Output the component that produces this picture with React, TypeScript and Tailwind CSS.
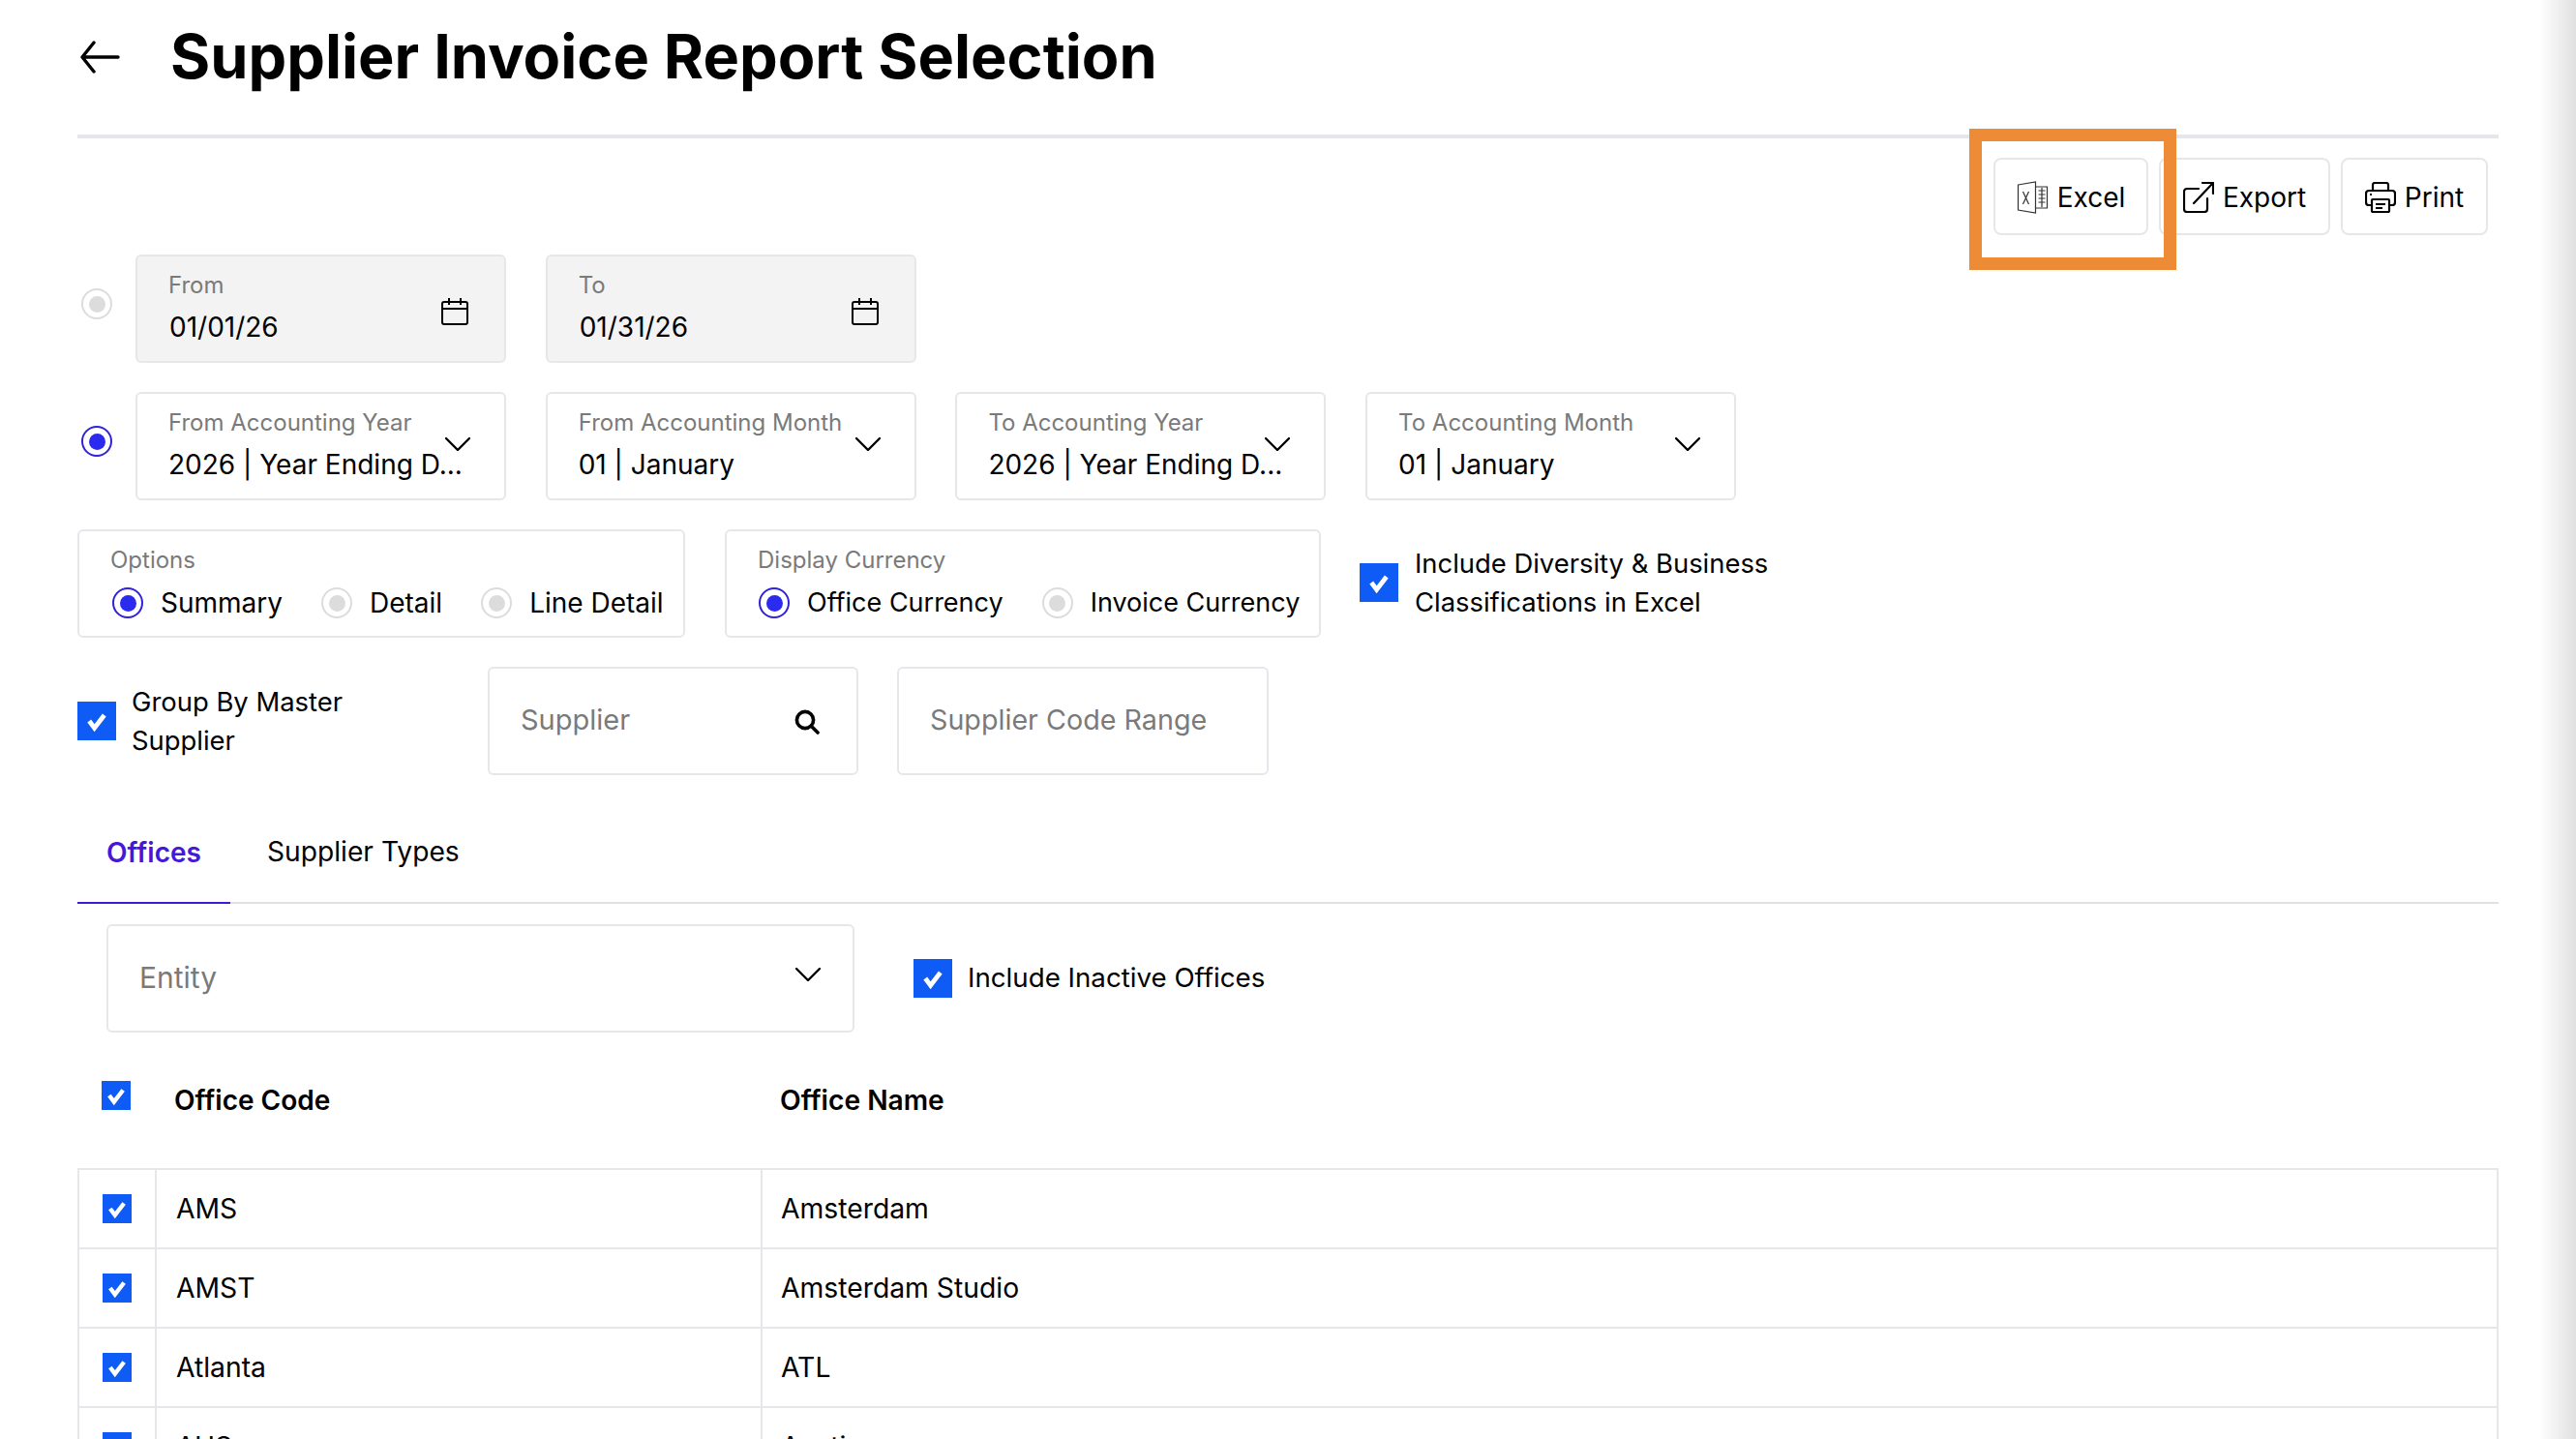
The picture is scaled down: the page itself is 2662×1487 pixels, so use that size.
const offices = [
  { code: "AMS", name: "Amsterdam" },
  { code: "AMST", name: "Amsterdam Studio" },
  { code: "Atlanta", name: "ATL" },
  { code: "AUS", name: "Austin" },
  { code: "BER", name: "Berlin" },
];

const Check = ({ small }: { small?: boolean }) => (
  <span
    className={`flex shrink-0 items-center justify-center bg-[#0f5bf5] ${small ? "h-[30px] w-[30px]" : "h-[40px] w-[40px]"}`}
  >
    <svg viewBox="0 0 20 20" className={small ? "h-[22px] w-[22px]" : "h-[24px] w-[24px]"}>
      <path d="M3.5 10l4.5 6 8.5-11" fill="none" stroke="#fff" strokeWidth="4" />
    </svg>
  </span>
);

const Radio = ({ on }: { on?: boolean }) => (
  <span
    className={`flex h-[32px] w-[32px] shrink-0 items-center justify-center rounded-full border-2 ${on ? "border-[#2f22d8]" : "border-[#dcdcdc]"}`}
  >
    <span className={`h-[17px] w-[17px] rounded-full ${on ? "bg-[#2b2bf0]" : "bg-[#dcdcdc]"}`} />
  </span>
);

const Chevron = () => (
  <svg viewBox="0 0 26 14" fill="none" className="absolute right-[35px] top-[45px] h-[14px] w-[26px]">
    <path d="M1 1l12 12L25 1" stroke="#000" strokeWidth="2.4" strokeLinecap="round" strokeLinejoin="round" />
  </svg>
);

const Calendar = () => (
  <svg viewBox="0 0 28 28" fill="none" stroke="#000" strokeWidth="2" className="absolute right-[37px] top-[43px] h-[28px] w-[28px]">
    <rect x="1" y="4" width="26" height="23" rx="2" />
    <path d="M1 11h26M8 0v7M20 0v7" />
  </svg>
);

const Field = ({ label, value, disabled, icon }: { label: string; value: string; disabled?: boolean; icon: "calendar" | "chevron" }) => (
  <div
    className={`relative h-[112px] w-[383px] rounded-[6px] border-2 border-[#e5e7eb] pl-[32px] ${disabled ? "bg-[#f3f3f3]" : "bg-white"}`}
  >
    <div className="mt-[15px] text-[24px] leading-[30px] text-[#7a7a7a]">{label}</div>
    <div className={`mt-[10px] text-[28px] leading-[36px] text-black ${disabled ? "pl-[1px]" : ""}`}>{value}</div>
    {icon === "calendar" ? <Calendar /> : <Chevron />}
  </div>
);

const RadioOption = ({ label, on, size }: { label: string; on?: boolean; size: string }) => (
  <div className="flex items-center gap-[18px]">
    <Radio on={on} />
    <span className={`leading-[36px] text-black ${size}`}>{label}</span>
  </div>
);

const Placeholder = ({ text, width, size }: { text: string; width: string; size: string }) => (
  <div className={`relative flex h-[112px] items-center rounded-[6px] border-2 border-[#e5e7eb] pb-[2px] pl-[32px] text-[#7a7a7a] ${size} ${width}`}>
    {text}
  </div>
);

const ExcelIcon = () => (
  <svg viewBox="0 0 32 34" fill="none" stroke="#333" strokeWidth="1.2" className="h-[34px] w-[33px]">
    <path d="M1 4l18-3v32L1 30z" fill="#fff" />
    <path d="M19 6h12v22H19M22 10h7M22 14h7M22 18h7M22 22h7M25.5 7v20" />
    <path d="M6 11l6 13M12 11l-6 13" />
  </svg>
);

const ExportIcon = () => (
  <svg viewBox="0 0 32 32" fill="none" stroke="#000" strokeWidth="2.2" strokeLinecap="round" strokeLinejoin="round" className="h-[32px] w-[32px]">
    <path d="M16 7H4a3 3 0 0 0-3 3v18a3 3 0 0 0 3 3h18a3 3 0 0 0 3-3V17" />
    <path d="M11 22L31 1M20 1h11v11" />
  </svg>
);

const PrintIcon = () => (
  <svg viewBox="0 0 32 32" fill="none" stroke="#000" strokeWidth="2.2" strokeLinejoin="round" className="h-[32px] w-[32px]">
    <path d="M8 9V3a2 2 0 0 1 2-2h12a2 2 0 0 1 2 2v6" />
    <path d="M7 24H4a3 3 0 0 1-3-3v-9a3 3 0 0 1 3-3h24a3 3 0 0 1 3 3v9a3 3 0 0 1-3 3h-3" />
    <rect x="7" y="18" width="18" height="13" rx="1" />
    <path d="M11 23h10M11 27h7M5 13h2" />
  </svg>
);

const ActionButton = ({ label, width, children }: { label: string; width: string; children: React.ReactNode }) => (
  <button className={`flex h-[80px] items-center justify-center gap-[9px] rounded-[8px] border-2 border-[#e5e7eb] bg-white pt-[1px] text-[28px] text-black ${width}`}>
    {children}
    {label}
  </button>
);

export default function App() {
  return (
    <div className="relative h-[1487px] w-full overflow-hidden bg-white pl-[80px] pr-[80px] font-['Inter',sans-serif] text-black">
      <div className="flex h-[139px] items-center">
        <svg viewBox="0 0 42 34" fill="none" stroke="#000" strokeWidth="3.4" strokeLinecap="round" strokeLinejoin="round" className="mb-[22px] ml-[2px] h-[34px] w-[42px]">
          <path d="M40 17H3M15 2L3 17l12 15" />
        </svg>
        <h1 className="mb-[22px] ml-[52px] text-[63px] font-bold leading-none">Supplier Invoice Report Selection</h1>
      </div>
      <div className="h-[4px] bg-[#e5e7eb]" />

      <div className="mr-[11px] mt-[20px] flex justify-end gap-[11px]">
        <ActionButton label="Excel" width="w-[160px]"><ExcelIcon /></ActionButton>
        <ActionButton label="Export" width="w-[177px]"><ExportIcon /></ActionButton>
        <ActionButton label="Print" width="w-[152px]"><PrintIcon /></ActionButton>
      </div>

      <div className="mt-[20px] flex items-center">
        <span className="ml-[4px] mr-[24px] -translate-y-[5px]"><Radio /></span>
        <div className="flex gap-[40.7px]">
          <Field label="From" value="01/01/26" disabled icon="calendar" />
          <Field label="To" value="01/31/26" disabled icon="calendar" />
        </div>
      </div>

      <div className="mt-[30px] flex items-center">
        <span className="ml-[4px] mr-[24px] -translate-y-[5px]"><Radio on /></span>
        <div className="flex gap-[40.7px]">
          <Field label="From Accounting Year" value="2026 | Year Ending D..." icon="chevron" />
          <Field label="From Accounting Month" value="01 | January" icon="chevron" />
          <Field label="To Accounting Year" value="2026 | Year Ending D..." icon="chevron" />
          <Field label="To Accounting Month" value="01 | January" icon="chevron" />
        </div>
      </div>

      <div className="mt-[30px] flex">
        <div className="h-[112px] w-[628px] rounded-[6px] border-2 border-[#e5e7eb] pl-[32px]">
          <div className="mt-[15px] text-[24px] leading-[30px] text-[#7a7a7a]">Options</div>
          <div className="mt-[11px] flex gap-[40px] pl-[2px]">
            <RadioOption label="Summary" on size="text-[28px]" />
            <RadioOption label="Detail" size="text-[28px]" />
            <RadioOption label="Line Detail" size="text-[28px]" />
          </div>
        </div>
        <div className="ml-[41px] h-[112px] w-[616px] rounded-[6px] border-2 border-[#e5e7eb] pl-[32px]">
          <div className="mt-[15px] text-[24px] leading-[30px] text-[#7a7a7a]">Display Currency</div>
          <div className="mt-[11px] flex gap-[40px] pl-[1px]">
            <RadioOption label="Office Currency" on size="text-[27px]" />
            <RadioOption label="Invoice Currency" size="text-[27px]" />
          </div>
        </div>
        <div className="ml-[40px] mt-[35px] flex h-[40px] items-center">
          <Check />
        </div>
        <div className="ml-[17px] mt-[15px] text-[27.4px] leading-[40px]">
          Include Diversity &amp; Business
          <br />
          Classifications in Excel
        </div>
      </div>

      <div className="mt-[30px] flex h-[112px]">
        <div className="flex w-[424px] items-center gap-[16px]">
          <Check />
          <span className="text-[27.4px] leading-[40px]">
            Group By Master
            <br />
            Supplier
          </span>
        </div>
        <div className="relative">
          <Placeholder text="Supplier" width="w-[383px]" size="text-[29px]" />
          <svg viewBox="0 0 26 26" fill="none" stroke="#000" strokeWidth="3.6" strokeLinecap="round" className="absolute right-[40px] top-[44px] h-[26px] w-[26px]">
            <circle cx="11" cy="11" r="8.6" />
            <path d="M17.5 17.5L24 24" />
          </svg>
        </div>
        <div className="ml-[40px]">
          <Placeholder text="Supplier Code Range" width="w-[384px]" size="text-[28.7px]" />
        </div>
      </div>

      <div className="mt-[28px] flex h-[105px] border-b-2 border-[#dfe1e5]">
        <div className="-mb-[2px] flex h-[105px] w-[158px] items-center justify-center border-b-2 border-[#4318d8] text-[28px] font-semibold text-[#4318d8]">
          Offices
        </div>
        <div className="ml-[38px] flex items-center text-[28.2px]">Supplier Types</div>
      </div>

      <div className="ml-[30px] mt-[21px] flex items-center">
        <div className="relative">
          <Placeholder text="Entity" width="w-[773px]" size="text-[30px]" />
          <Chevron />
        </div>
        <div className="ml-[61px] flex items-center gap-[16px] text-[27.7px]">
          <Check />
          Include Inactive Offices
        </div>
      </div>

      <div className="flex h-[140px] items-center">
        <span className="ml-[25px] -translate-y-[5px]"><Check small /></span>
        <span className="ml-[45px] w-[626px] text-[28px] font-semibold">Office Code</span>
        <span className="text-[28.2px] font-semibold">Office Name</span>
      </div>

      <div className="border-l-2 border-r-2 border-t-2 border-[#e5e7eb]">
        {offices.map((office) => (
          <div key={office.code} className="grid h-[82px] grid-cols-[78px_626px_1fr] border-b-2 border-[#e5e7eb] text-[28.3px]">
            <div className="flex items-center justify-center"><Check small /></div>
            <div className="flex items-center border-l-2 border-[#e5e7eb] pl-[20px]">{office.code}</div>
            <div className="flex items-center border-l-2 border-[#e5e7eb] pl-[19px]">{office.name}</div>
          </div>
        ))}
      </div>

      <div className="pointer-events-none absolute left-[2035px] top-[133px] h-[146px] w-[214px] border-[13px] border-[#ed8b37]" />
      <div className="pointer-events-none absolute right-0 top-0 h-full w-[38px] bg-gradient-to-r from-white to-[#e0e0e0]" />
    </div>
  );
}
